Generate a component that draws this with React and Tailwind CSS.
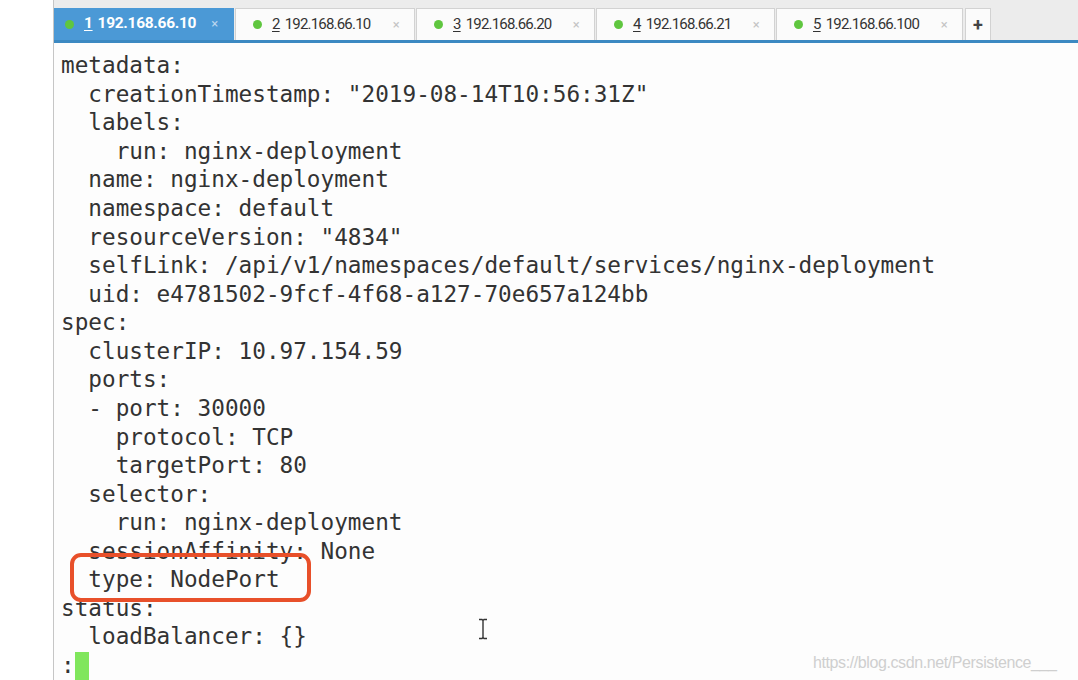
import React from 'react';

const tabs = [
    { n: '1', ip: '192.168.66.10', w: 'w-[180px]', active: true },
    { n: '2', ip: '192.168.66.10', w: 'w-[180px]' },
    { n: '3', ip: '192.168.66.20', w: 'w-[179px]' },
    { n: '4', ip: '192.168.66.21', w: 'w-[179px]' },
    { n: '5', ip: '192.168.66.100', w: 'w-[187px]' },
];

const lines = [
    'metadata:',
    '  creationTimestamp: "2019-08-14T10:56:31Z"',
    '  labels:',
    '    run: nginx-deployment',
    '  name: nginx-deployment',
    '  namespace: default',
    '  resourceVersion: "4834"',
    '  selfLink: /api/v1/namespaces/default/services/nginx-deployment',
    '  uid: e4781502-9fcf-4f68-a127-70e657a124bb',
    'spec:',
    '  clusterIP: 10.97.154.59',
    '  ports:',
    '  - port: 30000',
    '    protocol: TCP',
    '    targetPort: 80',
    '  selector:',
    '    run: nginx-deployment',
    '  sessionAffinity: None',
    '  type: NodePort',
    'status:',
    '  loadBalancer: {}',
];

function Tab({ tab }) {
    return (
        <div
            className={`${tab.w} h-[32px] shrink-0 flex items-center pr-[15px] border ${tab.active ? 'pl-[10px] bg-[#4b99d6] border-[#4b99d6] text-white font-bold text-[15.5px] tracking-[-0.3px]' : 'pl-[17px] bg-[#fbfbfb] border-[#d2d2d2] border-b-0 text-[#333] text-[15px] tracking-[-0.8px]'}`}
        >
            <span className="w-[9px] h-[9px] rounded-full bg-[#5fc63f] shrink-0" />
            <span className="ml-[10px] underline underline-offset-2">{tab.n}</span>
            <span className="ml-[5px]">{tab.ip}</span>
            <span className={`ml-auto text-[13px] font-normal ${tab.active ? 'text-[#b9d6ef]' : 'text-[#c4c4c4]'}`}>×</span>
        </div>
    );
}

export default function App() {
    return (
        <div className="w-[1078px] h-[680px] overflow-hidden flex bg-white">
            {/* bande blanche à gauche */}
            <div className="w-[53px] shrink-0 bg-white" />

            <div className="flex-1 flex flex-col border-l border-[#c6c6c6] relative">
                {/* Barre d'onglets */}
                <div className="bg-[#ececec] pt-[8px] flex items-end gap-[1px] font-['Roboto',sans-serif]">
                    {tabs.map(t => <Tab key={t.n} tab={t} />)}
                    <div className="ml-[1px] w-[26px] h-[32px] bg-[#fbfbfb] border border-b-0 border-[#d2d2d2] flex items-center justify-center text-[#444] text-[18px] font-bold">
                        +
                    </div>
                </div>
                <div className="h-[4px] bg-[#3c89c2]" />

                {/* Terminal */}
                <div className="flex-1 bg-[#fdfdfd] pl-[7px] pt-[8px] font-['DejaVu_Sans_Mono',monospace] text-[22.7px] leading-[28.57px] text-[#333] whitespace-pre">
                    {lines.map((l, i) => <div key={i}>{l}</div>)}
                    <div className="flex items-start">
                        <span>:</span>
                        <span className="w-[14px] h-[28px] mt-[1px] bg-[#80e65c]" />
                    </div>
                </div>

                {/* Encadré rouge */}
                <div className="absolute left-[16px] top-[553px] w-[241px] h-[49px] border-[4px] border-[#e8502a] rounded-[11px]" />

                {/* Curseur texte */}
                <svg className="absolute left-[423px] top-[618px]" width="12" height="22" viewBox="0 0 12 22">
                    <path d="M2 1.5h3l1 1 1-1h3M6 2.5v17M2 20.5h3l1-1 1 1h3" fill="none" stroke="#333" strokeWidth="1.4" />
                </svg>

                {/* Filigrane */}
                <div className="absolute left-[759px] top-[651px] font-['Liberation_Sans',sans-serif] text-[16px] tracking-[-0.4px] text-[#cfcfcf]">
                    https://blog.csdn.net/Persistence___
                </div>
            </div>
        </div>
    );
}
